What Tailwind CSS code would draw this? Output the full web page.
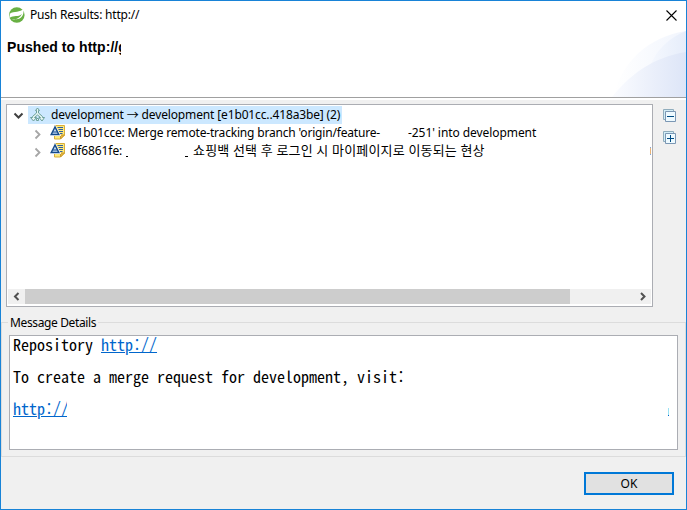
<!DOCTYPE html>
<html lang="ko">
<head>
<meta charset="utf-8">
<title>Push Results</title>
<script src="https://cdn.jsdelivr.net/npm/@tailwindcss/browser@4"></script>
</head>
<body class="overflow-hidden">
<div class="w-[687px] h-[510px] bg-[#f0f0f0] border border-[#1883d7] flex flex-col text-black text-[12px] leading-[18px] font-['Noto_Sans','Noto_Sans_CJK_KR',sans-serif] whitespace-nowrap">
  <header class="relative h-[97px] shrink-0 bg-white border-b border-[#a0a0a0] overflow-hidden">
    <svg class="absolute right-0 top-[28px]" width="140" height="68" viewBox="0 0 140 68">
      <defs>
        <linearGradient id="a" x1="0" x2="1"><stop offset="0" stop-color="#fff"/><stop offset="1" stop-color="#f1f5fd"/></linearGradient>
        <linearGradient id="b" x1="0" x2="1"><stop offset="0" stop-color="#fbfcff"/><stop offset="1" stop-color="#dde5f7"/></linearGradient>
        <linearGradient id="c" x1="0" x2="1"><stop offset="0" stop-color="#f5f8fe"/><stop offset="1" stop-color="#e6edfa"/></linearGradient>
      </defs>
      <path d="M68 68C75 32 103 8 140 2V68Z" fill="url(#a)"/>
      <path d="M104 37C111 20 123 9 140 2V68H104Z" fill="url(#c)"/>
      <path d="M66 68C84 45 108 28 140 23V68Z" fill="url(#b)"/>
    </svg>
    <div class="relative flex items-center h-[28px] pl-[7px] pr-[9px]">
      <svg width="18" height="18" viewBox="0 0 18 18"><circle cx="8.8" cy="9" r="7.8" fill="#68b043"/><path d="M1.800 7.800C6 4.800 12.500 6.800 15.300 2.800C16.600 9 13 13.800 7.500 13.300C5.500 13.200 4 13.800 2.800 13.800C8 14.200 11.800 12 14 8C10 11.500 6 8.800 1.300 12Z" fill="#fff"/></svg>
      <span class="ml-[4px] tracking-[-0.2px]">Push Results: http://</span>
      <svg class="ml-auto" width="11" height="11" viewBox="0 0 11 11"><path d="M.5.5l10 10M10.5.5l-10 10" stroke="#000" stroke-width="1.1"/></svg>
    </div>
    <div class="relative pl-[6px] pt-[9px] flex font-bold text-[14px] tracking-[0.05px] font-['Liberation_Sans',sans-serif]"><span>Pushed to http://</span><span class="w-[3px] overflow-hidden">g</span></div>
  </header>
  <div class="h-[2px] bg-white shrink-0"></div>
  <main class="flex pl-[5px] pt-[4px] h-[207px] shrink-0">
    <section class="w-[647px] h-[203px] bg-white border border-[#abadb3] p-px flex flex-col">
      <div class="flex h-[18px] pl-[4px]">
        <svg class="w-[16px] h-[18px]" viewBox="0 0 16 18"><path d="M2.5 7.500l4 4 4-4" fill="none" stroke="#404040" stroke-width="2"/></svg>
        <div class="bg-[#cce8ff] w-[314px] flex">
          <svg class="ml-[2px] mt-px shrink-0" width="16" height="16" viewBox="0 0 16 16" fill="#e4f5f2" stroke="#6b9f99" stroke-width="1"><path d="M6.500 6V3.500h-1L7.500 1l2 2.500h-1V6l4 3.500v1h2l-2.500 3.500-3-3.500h1.500L7.500 8 4.500 10.500H6.500L3.500 14 .5 10.500h2v-1z"/><path d="M6.500 11.500h2v2h-2z"/></svg>
          <span class="ml-[5px] tracking-[-0.14px]">development <span class="relative top-px">→</span> development [e1b01cc..418a3be] (2)</span>
        </div>
      </div>
      <div class="flex h-[18px] pl-[24px]">
        <svg class="w-[16px] h-[18px]" viewBox="0 0 16 18"><path d="M3.500 6.500l4 4-4 4" fill="none" stroke="#a6a6a6" stroke-width="1.800"/></svg>
        <svg class="ml-[2px] shrink-0" width="16" height="18" viewBox="0 0 16 18"><use href="#commit"/></svg>
        <span class="ml-[4px] w-[338px] tracking-[-0.18px]">e1b01cce: Merge remote-tracking branch 'origin/feature-</span><span class="tracking-[-0.07px]">-251' into development</span>
      </div>
      <div class="flex h-[18px] pl-[24px]">
        <svg class="w-[16px] h-[18px]" viewBox="0 0 16 18"><path d="M3.500 6.500l4 4-4 4" fill="none" stroke="#a6a6a6" stroke-width="1.800"/></svg>
        <svg class="ml-[2px] shrink-0" width="16" height="18" viewBox="0 0 16 18"><g id="commit"><path d="M4.500 1.500h10v9.500l-4 4h-6z" fill="#fdea7c" stroke="#d9ae3a"/><path d="M14.500 11h-4v4z" fill="#e8b93a" stroke="#c99a2e"/><path d="M7.500 3.500h5.500M8.500 5.500h4.500M9 7.500h4M9.500 9.500h3" stroke="#315f9e"/><path d="M5 2.500L.5 11h9z" fill="#fff" stroke="#fff" stroke-width="2"/><path d="M5 3L1.200 10.500h7.600z" fill="#c5dcf5" stroke="#174b8b" stroke-width="1.500"/><path d="M3 8h4" stroke="#174b8b"/></g></svg>
        <span class="ml-[4px] w-[56px] tracking-[-0.1px]">df6861fe:</span>
        <i class="w-[2px] h-px mt-[14px] bg-black"></i><i class="w-[3px] h-px mt-[14px] ml-[57px] bg-black"></i>
        <span class="ml-[5px] leading-[16px] text-[13px] tracking-[0.17px]">쇼핑백 선택 후 로그인 시 마이페이지로 이동되는 현상</span>
        <i class="ml-auto mt-[5px] w-px h-[8px] bg-[#e8b377] border-y border-[#85a5d8]"></i>
      </div>
      <div class="mt-auto mb-px h-[15px] bg-[#f0f0f0] flex items-center">
        <svg width="17" height="15" viewBox="0 0 17 15"><path d="M10.500 4L7 7.500l3.500 3.500" fill="none" stroke="#505050" stroke-width="2"/></svg>
        <div class="w-[545px] h-[15px] bg-[#cdcdcd]"></div>
        <svg class="ml-auto" width="17" height="15" viewBox="0 0 17 15"><path d="M7 4l3.500 3.500L7 11" fill="none" stroke="#505050" stroke-width="2"/></svg>
      </div>
    </section>
    <aside class="flex flex-col gap-[8px] pl-[10px] pt-[5px]">
      <svg width="14" height="14" viewBox="0 0 14 14"><path d="M.5.5h10v10H.5z" fill="#d3edf6" stroke="#90adbd"/><path d="M2.500 2.500h10v10h-10z" fill="#eefaff" stroke="#7b97b4"/><path d="M4 7.500h7" stroke="#004b83"/></svg>
      <svg width="14" height="14" viewBox="0 0 14 14"><path d="M.5.5h10v10H.5z" fill="#d3edf6" stroke="#90adbd"/><path d="M2.500 2.500h10v10h-10z" fill="#eefaff" stroke="#7b97b4"/><path d="M4 7.500h7M7.500 4v7" stroke="#004b83"/></svg>
    </aside>
  </main>
  <fieldset class="mt-[6px] h-[144px] w-[685px] shrink-0 border border-[#dcdcdc] px-[7px]">
    <legend class="h-[18px] w-[90px] -ml-px px-[2px] pt-px leading-[18px] tracking-[-0.37px]">Message Details</legend>
    <div class="mt-[4px] w-[669px] h-[115px] bg-white border border-[#abadb3] pl-[3px] flex text-[16px] leading-[16px] font-['Noto_Sans_Mono_CJK_KR','Liberation_Mono',monospace]">
      <div><p>Repository <a class="text-[#0066cc] underline">http://</a></p><p class="mt-[16px]">To create a merge request for development, visit:</p><p class="mt-[16px] w-[54px] overflow-x-clip"><a class="text-[#0066cc] underline">http://</a></p></div>
      <i class="ml-auto mr-[8px] mt-[72px] w-px h-[8px] bg-[#9be3f5] border-b border-[#0066cc]"></i>
    </div>
  </fieldset>
  <footer class="flex justify-end pr-[12px] pt-[15px]">
    <button class="w-[90px] h-[23px] bg-[#e1e1e1] border-2 border-[#0078d7] leading-[18px]">OK</button>
  </footer>
</div>
</body>
</html>
